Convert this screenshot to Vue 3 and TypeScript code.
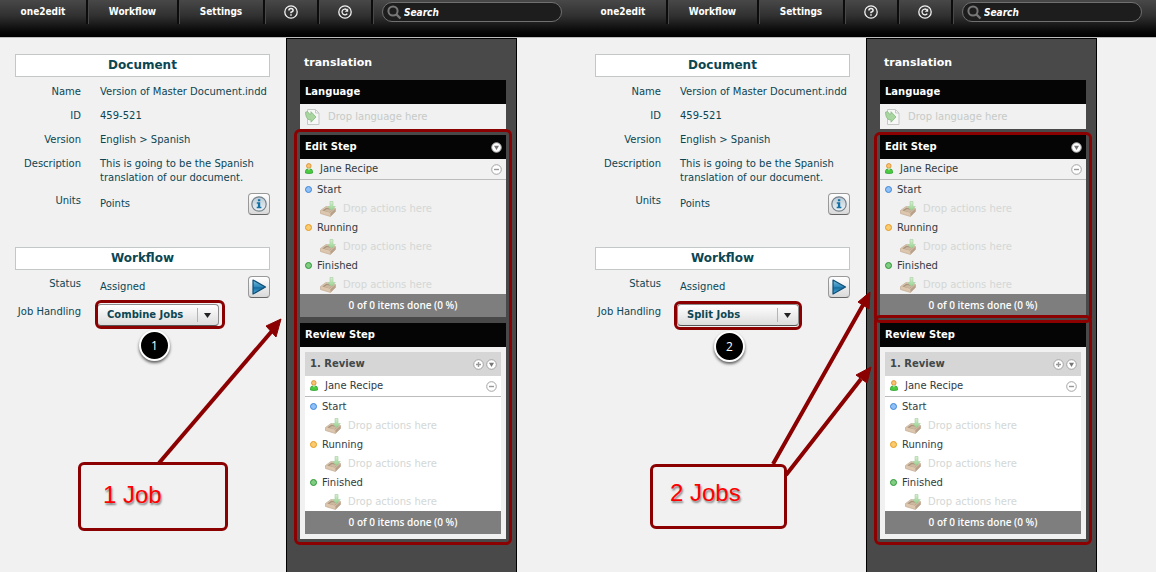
<script setup lang="ts">
interface Step {
  title: string
  review?: string
}
interface Panel {
  id: string
  job: string
  count: string
  badge: string
}

const panels: Panel[] = [
  { id: 'combine', job: 'Combine Jobs', count: '1 Job', badge: '1' },
  { id: 'split', job: 'Split Jobs', count: '2 Jobs', badge: '2' },
]
const menu: string[] = ['one2edit', 'Workflow', 'Settings']
const steps: Step[] = [{ title: 'Edit Step' }, { title: 'Review Step', review: '1. Review' }]
const states: string[] = ['Start', 'Running', 'Finished']
const jobOptions: string[] = ['Combine Jobs', 'Split Jobs']
</script>

<template>
  <svg class="symbols" aria-hidden="true">
    <defs>
      <linearGradient id="arrowGreen" x1="0" y1="0" x2="0" y2="1">
        <stop offset="0" stop-color="#d9f0d4" />
        <stop offset="1" stop-color="#93d08a" />
      </linearGradient>
      <linearGradient id="playBlue" x1="0" y1="0" x2="0" y2="1">
        <stop offset="0" stop-color="#7cc0e0" />
        <stop offset="0.5" stop-color="#2b86b8" />
        <stop offset="0.55" stop-color="#156a9e" />
        <stop offset="1" stop-color="#4fb4e0" />
      </linearGradient>
      <linearGradient id="infoSilver" x1="0" y1="0" x2="0" y2="1">
        <stop offset="0" stop-color="#b9c9d4" />
        <stop offset="1" stop-color="#eef3f6" />
      </linearGradient>
    </defs>
    <symbol id="tray" viewBox="0 0 16 16">
      <path d="M0.5 9.500 6 5.500 15.500 7.500V10.500L10.500 15.500 0.500 12.500z" fill="#dcc6ad" stroke="#c3ab93" stroke-width="0.700" />
      <path d="M2.300 9.600 6.300 6.800 13.700 8.200 10 11.600z" fill="#a8947f" />
      <path d="M4 10 7 8 12 9 9.700 11.300z" fill="#cdb79e" />
      <path d="M10.300 12.300 15.300 7.800V10.500L10.500 15.300z" fill="#b7a08a" />
      <path d="M10 0.500h3v5h2.300l-3.800 4-3.800-4H10z" fill="url(#arrowGreen)" stroke="#a5cf9f" stroke-width="0.600" />
    </symbol>
    <symbol id="person" viewBox="0 0 8 12">
      <circle cx="3.800" cy="2.900" r="2.300" fill="#f9c274" stroke="#d9912e" stroke-width="0.900" />
      <path d="M0.500 10V8.300Q0.500 6 3 6h2Q7.500 6 7.500 8.300V10q-3.500 1-7 0z" fill="#4bcb3e" stroke="#2fa132" stroke-width="0.800" />
      <path d="M2.800 5.600h2.200L4 7.600z" fill="#fff4d8" />
    </symbol>
    <symbol id="language" viewBox="0 0 15 16">
      <path d="M2.500 0.500h8l3.500 3.500v11.500H2.500z" fill="#f7f7f7" stroke="#c4c9c6" />
      <path d="M10.500 0.500v3.500H14" fill="none" stroke="#c4c9c6" />
      <path d="M0.500 3.200 2.600 2.500 4.300 5H6V2.700L11 8 6 13.200V10.800H4Q0.800 9.500 0.500 3.200z" fill="#a9d6a0" stroke="#86b980" stroke-width="0.8" />
    </symbol>
    <symbol id="minus" viewBox="0 0 11 11">
      <circle cx="5.500" cy="5.500" r="4.800" fill="#fff" stroke="#a3a3a3" />
      <path d="M3 5.500h5" stroke="#999" stroke-width="1.400" />
    </symbol>
    <symbol id="plus" viewBox="0 0 11 11">
      <circle cx="5.500" cy="5.500" r="4.800" fill="#fff" stroke="#a3a3a3" />
      <path d="M3 5.500h5M5.500 3v5" stroke="#999" stroke-width="1.400" />
    </symbol>
    <symbol id="down" viewBox="0 0 11 11">
      <circle cx="5.500" cy="5.500" r="4.800" fill="#fff" stroke="#a3a3a3" />
      <path d="M3 3.800h5L5.500 8z" fill="#777" />
    </symbol>
  </svg>

  <main class="workspace">
    <section v-for="panel in panels" :key="panel.id" class="panel">
      <header class="bar">
        <nav class="menu">
          <button v-for="item in menu" :key="item" type="button" class="menu-item">{{ item }}</button>
          <button type="button" class="menu-item menu-icon" aria-label="Help">
            <svg width="14" height="14" viewBox="0 0 14 14" fill="none" stroke="#f2f2f2">
              <circle cx="7" cy="7" r="6.200" stroke-width="1.300" />
              <path d="M4.900 5.500Q4.900 3.600 7 3.600T9.100 5.400Q9.100 6.500 7 7.200V8.300M7 9.200v1.600" stroke-width="1.500" />
            </svg>
          </button>
          <button type="button" class="menu-item menu-icon" aria-label="Reload">
            <svg width="14" height="14" viewBox="0 0 14 14" fill="none" stroke="#f2f2f2">
              <circle cx="7" cy="7" r="6.200" stroke-width="1.300" />
              <path d="M9.300 8.600A2.900 2.900 0 1 1 8.800 4.700" stroke-width="1.300" />
              <path d="M10.200 3.300v3.500H6.800z" fill="#f2f2f2" stroke="none" />
            </svg>
          </button>
        </nav>
        <label class="search">
          <svg width="15" height="15" viewBox="0 0 15 15" fill="none" stroke="#777" aria-hidden="true">
            <circle cx="6" cy="6" r="4.600" stroke-width="2" />
            <path d="M9.500 9.500 13.500 13.500" stroke-width="2.400" />
          </svg>
          <input type="search" placeholder="Search" aria-label="Search" />
        </label>
      </header>

      <div class="body">
        <div class="details">
          <h2 class="heading">Document</h2>
          <dl class="fields">
            <div class="field"><dt>Name</dt><dd>Version of Master Document.indd</dd></div>
            <div class="field"><dt>ID</dt><dd>459-521</dd></div>
            <div class="field"><dt>Version</dt><dd>English &gt; Spanish</dd></div>
            <div class="field"><dt>Description</dt><dd>This is going to be the Spanish translation of our document.</dd></div>
            <div class="field tall">
              <dt>Units</dt>
              <dd>
                <span>Points</span>
                <button type="button" class="square" aria-label="Document info">
                  <svg width="16" height="16" viewBox="0 0 16 16">
                    <circle cx="8" cy="8" r="7.200" fill="url(#infoSilver)" stroke="#75818a" stroke-width="1.200" />
                    <path d="M6.900 3.200h2.400v2H6.900zM5.800 6.300h3.400v4.500h1.200v1.400H5.700v-1.400h1.200V7.700H5.800z" fill="#1272a6" />
                  </svg>
                </button>
              </dd>
            </div>
          </dl>

          <h2 class="heading">Workflow</h2>
          <dl class="fields workflow">
            <div class="field tall">
              <dt>Status</dt>
              <dd>
                <span>Assigned</span>
                <button type="button" class="square" aria-label="Start workflow">
                  <svg width="16" height="16" viewBox="0 0 16 16">
                    <path d="M2 1 14.500 8 2 15z" fill="url(#playBlue)" stroke="#0d4d75" stroke-width="1.200" stroke-linejoin="round" />
                  </svg>
                </button>
              </dd>
            </div>
            <div class="field tall">
              <dt><label :for="'job-' + panel.id">Job Handling</label></dt>
              <dd>
                <span class="drop">
                  <select :id="'job-' + panel.id">
                    <option v-for="o in jobOptions" :key="o" :selected="o === panel.job">{{ o }}</option>
                  </select>
                  <svg class="caret" width="20" height="14" viewBox="0 0 20 14" aria-hidden="true">
                    <path d="M0.500 0v14" stroke="#b5b5b5" />
                    <path d="M7 5h7l-3.500 5z" fill="#222" />
                  </svg>
                </span>
              </dd>
            </div>
          </dl>
        </div>

        <aside class="flow">
          <h3 class="flow-title">translation</h3>
          <section class="card">
            <h4 class="card-head">Language</h4>
            <p class="language-row">
              <svg width="15" height="16"><use href="#language" /></svg>Drop language here
            </p>
          </section>
          <section v-for="step in steps" :key="step.title" class="card">
            <h4 class="card-head">
              {{ step.title }}
              <button v-if="!step.review" type="button" class="mini" aria-label="Step options">
                <svg width="11" height="11"><use href="#down" /></svg>
              </button>
            </h4>
            <div :class="{ nested: step.review }">
              <div v-if="step.review" class="review-head">
                {{ step.review }}
                <span class="tools">
                  <button type="button" class="mini" aria-label="Add review"><svg width="11" height="11"><use href="#plus" /></svg></button>
                  <button type="button" class="mini" aria-label="Review options"><svg width="11" height="11"><use href="#down" /></svg></button>
                </span>
              </div>
              <div class="assignee">
                <svg width="8" height="12"><use href="#person" /></svg>
                <span>Jane Recipe</span>
                <button type="button" class="mini" aria-label="Remove Jane Recipe"><svg width="11" height="11"><use href="#minus" /></svg></button>
              </div>
              <ul class="states">
                <li v-for="state in states" :key="state">
                  <p class="state"><i :class="['dot', state.toLowerCase()]"></i>{{ state }}</p>
                  <p class="target"><svg width="16" height="16"><use href="#tray" /></svg>Drop actions here</p>
                </li>
              </ul>
              <p class="progress">0 of 0 items done (0 %)</p>
            </div>
          </section>
        </aside>
      </div>

      <div :class="['notes', panel.id]">
        <svg class="arrows" width="300" height="200" viewBox="0 0 300 200" aria-hidden="true">
          <template v-if="panel.id === 'combine'">
            <path d="M159 183 272 51" />
            <path class="tip" d="M281 39 266 46 276 57z" />
          </template>
          <template v-else>
            <path d="M193 184 283 25M206 195 281 99" />
            <path class="tip" d="M290 12 278 22 289 29zM291 87 276 95 287 103z" />
          </template>
        </svg>
        <span class="ring job-ring"></span>
        <span class="ring ring-a"></span>
        <span v-if="panel.id === 'split'" class="ring ring-b"></span>
        <span class="badge">{{ panel.badge }}</span>
        <p class="callout">{{ panel.count }}</p>
      </div>
    </section>
  </main>
</template>

<style>
body {
  margin: 0;
  background: #f1f1f1;
}
</style>

<style scoped>
* {
  box-sizing: border-box;
}
h2, h3, h4, p, dl, dd, ul {
  margin: 0;
  padding: 0;
}
button {
  padding: 0;
  border: 0;
  background: none;
  color: inherit;
  font: inherit;
}
svg {
  display: block;
  flex: none;
}
.symbols {
  position: absolute;
  width: 0;
  height: 0;
}
.workspace {
  display: grid;
  grid-template-columns: minmax(0, 145fr) minmax(0, 144fr);
  min-height: 100vh;
  overflow: hidden;
  font: 10px/14px "DejaVu Sans", Verdana, sans-serif;
  color: #0c4653;
}
.panel {
  position: relative;
  display: flex;
  flex-direction: column;
}
.bar {
  display: flex;
  height: 38px;
  border-bottom: 1px solid #bdbdbd;
  background: linear-gradient(#484848 0, #303030 16px, #090909 31px, #000 37px);
}
.menu {
  display: flex;
}
.menu-item {
  display: flex;
  justify-content: center;
  width: 88px;
  height: 24px;
  padding-top: 5px;
  border-right: 2px solid #0c0c0c;
  box-shadow: 1px 0 #484848;
  color: #fff;
  font: bold 10px/14px "DejaVu Sans Condensed", "DejaVu Sans", sans-serif;
}
.menu-item:nth-child(2) {
  width: 91px;
}
.menu-item:nth-child(3) {
  width: 86px;
}
.menu-item.menu-icon {
  width: 54px;
}
.search {
  display: flex;
  align-items: center;
  gap: 2px;
  width: 180px;
  height: 20px;
  margin: 2px 0 0 9px;
  padding-left: 4px;
  border: 1px solid #707070;
  border-radius: 10px;
  background: #1d1d1d;
}
.search input {
  flex: 1;
  min-width: 0;
  padding: 1px 0 0;
  border: 0;
  outline: 0;
  background: none;
  color: #fff;
  font: italic bold 10px/14px "DejaVu Sans Condensed", "DejaVu Sans", sans-serif;
}
.search input::placeholder {
  color: #fff;
  opacity: 1;
}
.body {
  display: flex;
  flex: 1;
}
.details {
  width: 286px;
  flex: none;
  padding: 16px 16px 0 15px;
}
.heading {
  height: 23px;
  border: 1px solid #c3c7c7;
  background: #fff;
  text-align: center;
  font: bold 12px/20px "DejaVu Sans", Verdana, sans-serif;
}
.fields {
  display: flex;
  flex-direction: column;
  gap: 10px;
  padding: 8px 0 32px;
}
.fields.workflow {
  gap: 8px;
}
.field {
  display: grid;
  grid-template-columns: 66px minmax(0, 1fr);
  column-gap: 19px;
}
.field dt {
  text-align: right;
  white-space: nowrap;
}
.field dd {
  margin-right: -4px;
}
.field.tall {
  margin-top: -2px;
}
.tall dt {
  padding-top: 1px;
}
.tall dd {
  display: flex;
  align-items: center;
  justify-content: space-between;
  height: 22px;
  margin-right: 0;
}
.square {
  display: grid;
  place-items: center;
  width: 22px;
  height: 22px;
  border: 1px solid #999;
  border-bottom-color: #666;
  border-radius: 4px;
  background: linear-gradient(#fff, #d9d9d9);
}
.drop {
  position: relative;
  display: block;
  margin-left: -3px;
}
.drop select {
  display: block;
  appearance: none;
  width: 122px;
  height: 22px;
  padding: 0 26px 0 9px;
  border: 1px solid #8d8d8d;
  border-bottom-color: #555;
  border-radius: 4px;
  background: linear-gradient(#fff, #dcdcdc);
  color: #0c4653;
  font: bold 10px/14px "DejaVu Sans", Verdana, sans-serif;
}
.caret {
  position: absolute;
  right: 2px;
  top: 4px;
  pointer-events: none;
}
.flow {
  width: 231px;
  flex: none;
  padding: 17px 10px 27px 13px;
  border: 1px solid #000;
  border-bottom: 0;
  background: #494949;
}
.flow-title {
  margin-bottom: 10px;
  padding-left: 4px;
  color: #fff;
  font: bold 11px/14px "DejaVu Sans", Verdana, sans-serif;
}
.card {
  margin-bottom: 6px;
  background: #f1f1f1;
  color: #333b40;
}
.card-head {
  display: flex;
  align-items: center;
  justify-content: space-between;
  height: 24px;
  padding: 0 4px 0 5px;
  background: #050505;
  color: #fff;
  font: bold 10px/14px "DejaVu Sans", Verdana, sans-serif;
}
.mini {
  flex: none;
}
.language-row {
  display: flex;
  align-items: center;
  gap: 8px;
  height: 25px;
  padding-left: 5px;
  color: #c6cac7;
}
.nested {
  padding: 5px;
}
.nested > * {
  background: #fff;
}
.nested .review-head {
  display: flex;
  align-items: center;
  justify-content: space-between;
  height: 24px;
  padding: 0 4px 0 5px;
  background: #d6d6d6;
  color: #40484c;
  font-weight: bold;
}
.tools {
  display: flex;
  gap: 2px;
}
.assignee {
  display: flex;
  align-items: center;
  gap: 7px;
  height: 21px;
  padding: 0 4px 0 5px;
  border-bottom: 1px solid #bcbcbc;
}
.assignee span {
  flex: 1;
}
.states {
  list-style: none;
}
.state,
.target {
  display: flex;
  align-items: center;
  height: 19px;
}
.state {
  gap: 5px;
  padding-left: 5px;
}
.target {
  gap: 7px;
  padding-left: 20px;
  color: #d3d7d5;
}
.dot {
  width: 7px;
  height: 7px;
  border: 1px solid #3f86d6;
  border-radius: 50%;
  background: #8fc0f8;
}
.dot.running {
  border-color: #e69a1e;
  background: #fbcb72;
}
.dot.finished {
  border-color: #2d9638;
  background: #80cc80;
}
.card .progress {
  height: 23px;
  background: #7e7e7e;
  color: #fff;
  text-align: center;
  font: 600 10px/22px "Open Sans", "Noto Sans", sans-serif;
}
.notes {
  position: absolute;
  inset: 0;
  pointer-events: none;
}
.notes > * {
  position: absolute;
}
.arrows {
  left: 0;
  top: 280px;
  overflow: visible;
  fill: none;
  stroke: #8b0000;
  stroke-width: 4;
}
.arrows .tip {
  fill: #8b0000;
  stroke-width: 1;
}
.ring {
  border: 3px solid #8b0000;
  border-radius: 6px;
}
.job-ring {
  left: 95px;
  top: 300px;
  width: 130px;
  height: 29px;
}
.split .job-ring {
  left: 94px;
  top: 301px;
  width: 128px;
}
.ring-a {
  left: 294px;
  top: 129px;
  width: 218px;
  height: 416px;
}
.split .ring-a {
  top: 132px;
  height: 191px;
}
.ring-b {
  left: 294px;
  top: 315px;
  width: 218px;
  height: 230px;
}
.badge {
  left: 139px;
  top: 330px;
  width: 31px;
  height: 31px;
  border: 2px solid #fff;
  border-radius: 50%;
  background: #000;
  box-shadow: 0 2px 3px #0009;
  color: #fff;
  text-align: center;
  font: 12px/27px "Open Sans", sans-serif;
}
.split .badge {
  left: 134px;
  top: 331px;
}
.callout {
  left: 78px;
  top: 462px;
  width: 150px;
  height: 69px;
  padding-left: 22px;
  border: 3px solid #8b0000;
  border-radius: 6px;
  background: #f1f1f1;
  color: #f00;
  font: 24px/60px "Liberation Sans", Arial, sans-serif;
  text-shadow: 1px 2px 2px #0007;
}
.split .callout {
  left: 70px;
  top: 464px;
  width: 137px;
  height: 65px;
  padding-left: 17px;
  line-height: 52px;
}
</style>
